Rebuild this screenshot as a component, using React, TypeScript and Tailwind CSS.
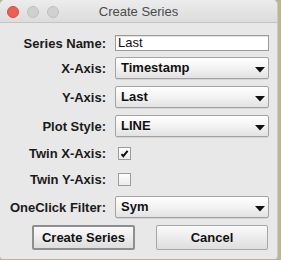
import React from "react";

const font = { fontFamily: '"Liberation Sans", Arial, sans-serif' };

function Arrow() {
  return (
    <svg width="10" height="6" viewBox="0 0 10 6" className="absolute right-[3px] top-[9px]">
      <polygon points="0,0 10,0 5,5.5" fill="#111" />
    </svg>
  );
}

function Select({ value }: { value: string }) {
  return (
    <div className="relative h-[22px] w-[154px] rounded-[2px] border border-[#a3a3a3] bg-gradient-to-b from-[#ffffff] via-[#f3f3f3] to-[#e2e2e2] shadow-[0_1px_0_rgba(0,0,0,0.08)] flex items-center pl-[5px] text-[13px] font-bold text-[#111]">
      {value}
      <Arrow />
    </div>
  );
}

function Row({ label, children, className }: { label: string; children: React.ReactNode; className?: string }) {
  return (
    <div className={"flex items-center " + (className ?? "")}>
      <div className="w-[106px] text-right text-[13px] font-bold text-[#1a1a1a] leading-none whitespace-nowrap">{label}</div>
      <div className="ml-[9px] flex items-center">{children}</div>
    </div>
  );
}

function Checkbox({ checked }: { checked?: boolean }) {
  return (
    <div className="ml-[3px] h-[13px] w-[13px] border border-[#9c9c9c] bg-gradient-to-b from-[#fdfdfd] to-[#ececec] flex items-center justify-center">
      {checked && (
        <svg width="11" height="11" viewBox="0 0 11 11">
          <path d="M2.5 6.2 L4.3 8.2 L8.6 2.8" stroke="#111" strokeWidth="2" fill="none" />
        </svg>
      )}
    </div>
  );
}

export default function App() {
  return (
    <div className="w-[281px] h-[260px] bg-[#b9b78f]" style={font}>
      <div className="w-[278px] h-[259px] bg-[#e8e8e8] rounded-t-[5px] rounded-b-[3px] overflow-hidden border-r border-[#c9c9c9] flex flex-col">
        <div className="relative h-[23px] shrink-0 border-b border-[#c4c4c4] bg-gradient-to-b from-[#ececec] to-[#dcdcdc] flex items-center justify-center">
          <div className="absolute left-[7px] top-[6px] flex gap-[8px]">
            <div className="h-[12px] w-[12px] rounded-full bg-[#ec5f57] border border-[#d9493f]" />
            <div className="h-[12px] w-[12px] rounded-full bg-[#d0d0d0] border border-[#c0c0c0]" />
            <div className="h-[12px] w-[12px] rounded-full bg-[#d0d0d0] border border-[#c0c0c0]" />
          </div>
          <div className="text-[13px] text-[#4a4a4a] leading-none pt-[1px]">Create Series</div>
        </div>

        <div className="flex flex-col">
          <Row label="Series Name:" className="mt-[12px]">
            <div className="h-[16px] w-[154px] border border-[#9a9a9a] bg-white shadow-[inset_0_1px_1px_rgba(0,0,0,0.12)] flex items-center pl-[2px] text-[13px] text-[#111]">
              Last
            </div>
          </Row>
          <Row label="X-Axis:" className="mt-[6px]">
            <Select value="Timestamp" />
          </Row>
          <Row label="Y-Axis:" className="mt-[7px]">
            <Select value="Last" />
          </Row>
          <Row label="Plot Style:" className="mt-[7px]">
            <Select value="LINE" />
          </Row>
          <Row label="Twin X-Axis:" className="mt-[10px]">
            <Checkbox checked />
          </Row>
          <Row label="Twin Y-Axis:" className="mt-[13px]">
            <Checkbox />
          </Row>
          <Row label="OneClick Filter:" className="mt-[10px]">
            <Select value="Sym" />
          </Row>
          <div className="mt-[7px] flex">
            <div className="ml-[32px] h-[25px] w-[103px] rounded-[2px] border-2 border-[#8e8e8e] bg-gradient-to-b from-[#fafafa] to-[#dedede] flex items-center justify-center text-[13px] font-bold text-[#111]">
              Create Series
            </div>
            <div className="ml-[21px] h-[25px] w-[112px] rounded-[2px] border border-[#a6a6a6] bg-gradient-to-b from-[#fafafa] to-[#dedede] flex items-center justify-center text-[13px] font-bold text-[#111]">
              Cancel
            </div>
          </div>
        </div>
      </div>
    </div>
  );
}
